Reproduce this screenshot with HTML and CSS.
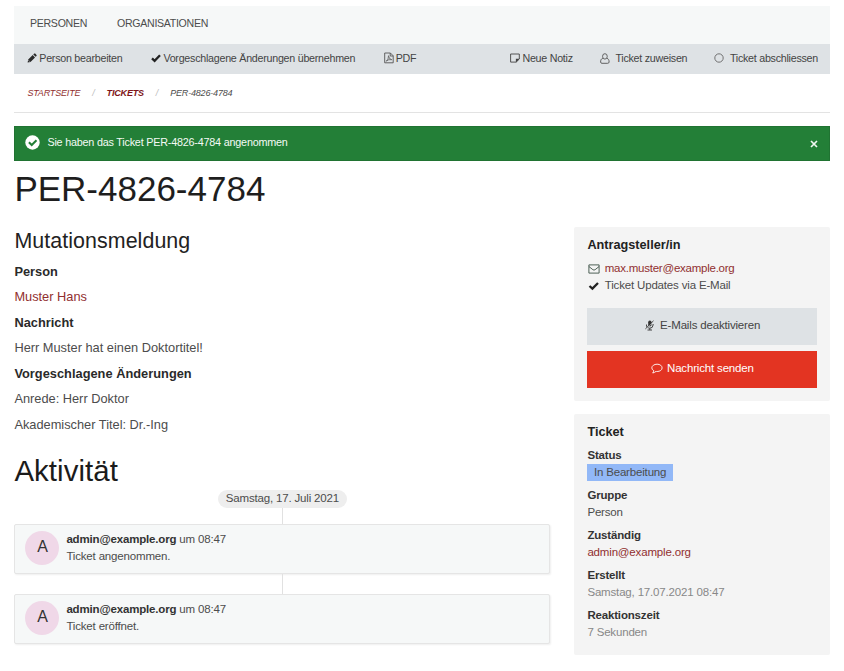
FILE: index.html
```html
<!DOCTYPE html>
<html lang="de">
<head>
<meta charset="utf-8">
<title>PER-4826-4784</title>
<link rel="stylesheet" href="styles.css">
</head>
<body>
<div class="page">
  <nav class="nav"><a>PERSONEN</a><a>ORGANISATIONEN</a></nav>
  <div class="toolbar">
    <a class="t-edit"><svg class="ico" width="10" height="10" viewBox="0 0 10 10"><path d="M.6 9.500 1.200 6.600 5.700 2.100 8 4.400 3.500 8.900zM6.300 1.500 7.200.6Q7.700.2 8.200.6L9.500 1.900Q9.900 2.400 9.500 2.900L8.600 3.800z" fill="#2b2b2b"/><path d="m1.500 7.300 1.300 1.300" stroke="#dee2e5" stroke-width=".7"/></svg><span>Person bearbeiten</span></a>
    <a class="t-apply"><svg class="ico" width="10" height="10" viewBox="0 0 10 10"><path d="m1 5.300 2.600 2.500L9 2.300" fill="none" stroke="#222" stroke-width="2.300"/></svg><span>Vorgeschlagene Änderungen übernehmen</span></a>
    <a class="t-pdf"><svg class="ico" width="10" height="12" viewBox="0 0 10 12"><path d="M.7 1H6.400L9.200 3.800V10.800H.7zM6.200 1V4H9.200" fill="none" stroke="#555" stroke-width=".9"/><path d="M2.200 9.200Q4.700 7.800 4.500 3.700Q5 7.300 7.800 7.700Q4.500 7 2.200 9.200" fill="none" stroke="#555" stroke-width=".75"/></svg><span>PDF</span></a>
    <a class="t-note"><svg class="ico" width="10" height="10" viewBox="0 0 10 10"><path d="M.6 1H9.300V6L6.200 9.100H.6z" fill="none" stroke="#444" stroke-width=".9"/><path d="M5.900 5.800H9.600L5.900 9.500z" fill="#444"/></svg><span>Neue Notiz</span></a>
    <a class="t-assign"><svg class="ico" width="10" height="11" viewBox="0 0 10 11"><path d="M2.800 5.400C1 5.800.6 7.300.6 9.100Q.7 10.300 2 10.300H7.700Q9.100 10.200 9.100 9C9.100 7 8.500 5.700 7 5.400" fill="none" stroke="#555" stroke-width=".9"/><ellipse cx="4.900" cy="3.400" rx="2.350" ry="2.700" fill="none" stroke="#555" stroke-width=".9"/></svg><span>Ticket zuweisen</span></a>
    <a class="t-close"><svg class="ico" width="10" height="10" viewBox="0 0 10 10"><circle cx="5" cy="5" r="4.200" fill="none" stroke="#666" stroke-width=".9"/></svg><span>Ticket abschliessen</span></a>
  </div>
  <div class="crumbs"><a>STARTSEITE</a><i class="sep">/</i><a class="strong">TICKETS</a><i class="sep">/</i><span>PER-4826-4784</span></div>
  <div class="alert"><svg width="15" height="15" viewBox="0 0 15 15"><circle cx="7.500" cy="7.500" r="7.200" fill="#fff"/><path d="m3.900 7.300 2.800 2.700 4.800-4.800" fill="none" stroke="#237f37" stroke-width="2"/></svg><span class="alert-text">Sie haben das Ticket PER-4826-4784 angenommen</span><svg class="dismiss" width="8" height="8" viewBox="0 0 8 8"><path d="m1 1 6 6M7 1 1 7" stroke="#f0f6f1" stroke-width="1.700"/></svg></div>
  <h1>PER-4826-4784</h1>
  <div class="columns">
    <main>
      <h2>Mutationsmeldung</h2>
      <h5>Person</h5>
      <p><a>Muster Hans</a></p>
      <h5>Nachricht</h5>
      <p>Herr Muster hat einen Doktortitel!</p>
      <h5>Vorgeschlagene Änderungen</h5>
      <p>Anrede: Herr Doktor</p>
      <p class="last">Akademischer Titel: Dr.-Ing</p>
      <h2 class="activity">Aktivität</h2>
      <div class="timeline">
        <div class="date">Samstag, 17. Juli 2021</div>
        <div class="line first"></div>
        <div class="entry"><div class="avatar">A</div><div class="body"><div><b>admin@example.org</b> um 08:47</div><div>Ticket angenommen.</div></div></div>
        <div class="line"></div>
        <div class="entry"><div class="avatar">A</div><div class="body"><div><b>admin@example.org</b> um 08:47</div><div>Ticket eröffnet.</div></div></div>
      </div>
    </main>
    <aside>
      <section class="card requester">
        <h4>Antragsteller/in</h4>
        <div class="row"><svg width="12" height="10" viewBox="0 0 12 10"><path d="M.9.900H11.100V9.100H.9zM.9 2.500 4.900 5.700Q6 6.500 7.100 5.700L11.100 2.500" fill="none" stroke="#3c5145" stroke-width=".9"/></svg><a>max.muster@example.org</a></div>
        <div class="row"><svg width="12" height="10" viewBox="0 0 12 10"><path d="m1.500 5 2.900 2.600L10 2" fill="none" stroke="#222" stroke-width="2.300"/></svg><span>Ticket Updates via E-Mail</span></div>
        <div class="btn grey"><svg width="9" height="11" viewBox="0 0 9 11"><rect x="3.200" y=".6" width="3.300" height="5.800" rx="1.600" fill="#333"/><path d="M1.500 4.500V6Q1.700 8.200 4.800 8.200Q7.900 8.200 8.100 5V4M4.800 8.200V10M2.500 10H7" fill="none" stroke="#333" stroke-width=".9"/><path d="M8.900 1.300.8 9.400" stroke="#dee2e5" stroke-width=".8"/><path d="M8.500.8.400 8.900" stroke="#333" stroke-width=".9"/></svg><span>E-Mails deaktivieren</span></div>
        <div class="btn red"><svg width="12" height="11" viewBox="0 0 12 11"><path d="M6.100 1.200C9 1.200 11.100 2.800 11.100 4.900S9 8.500 6.100 8.500Q5.500 8.500 5 8.400Q3.500 9.700 1.700 10Q2.700 8.800 2.800 7.700Q.8 6.600.8 4.900C.8 2.800 3.200 1.200 6.100 1.200z" fill="none" stroke="#fff" stroke-width=".9"/></svg><span>Nachricht senden</span></div>
      </section>
      <section class="card ticket">
        <h4>Ticket</h4>
        <dl>
          <dt>Status</dt><dd><span class="badge">In Bearbeitung</span></dd>
          <dt>Gruppe</dt><dd>Person</dd>
          <dt>Zuständig</dt><dd><a>admin@example.org</a></dd>
          <dt>Erstellt</dt><dd class="muted">Samstag, 17.07.2021 08:47</dd>
          <dt>Reaktionszeit</dt><dd class="muted">7 Sekunden</dd>
        </dl>
      </section>
    </aside>
  </div>
</div>
</body>
</html>
```
FILE: styles.css
```css
* { box-sizing: border-box; }
body { margin: 0; background: #fff; color: #4c4c4c; font: 11.5px/17px "Liberation Sans", Arial, sans-serif; letter-spacing: -.17px; white-space: nowrap; }
svg { flex: none; display: block; }
h1, h2, h4, h5, p, dl, dt, dd { margin: 0; }
.page { width: 816px; margin-left: 14.4px; padding-top: 5.6px; }
.nav { height: 38.4px; background: #f6f8f8; display: flex; gap: 30px; padding: 0 15.6px; font-size: 10.6px; line-height: 35.4px; letter-spacing: -.3px; }
.toolbar { height: 29.7px; background: #dee2e5; display: flex; align-items: center; padding: 0 12.4px 1px; font-size: 10.7px; letter-spacing: -.25px; color: #444; }
.toolbar a { display: flex; align-items: center; gap: 2.5px; }
.t-apply { margin-left: 29px; }
.t-pdf { margin-left: 28.4px; }
.toolbar .t-apply, .toolbar .t-pdf { gap: 2px; }
.t-note { margin-left: auto; }
.t-assign, .t-close { margin-left: 27px; }
.toolbar .t-assign, .toolbar .t-close { gap: 5.6px; }
.crumbs { height: 39px; border-bottom: 1px solid #e3e3e3; padding-left: 13px; display: flex; font-size: 9px; letter-spacing: -.18px; line-height: 38.6px; font-style: italic; }
.sep { margin: 0 12px; color: #bbb; }
.strong { font-weight: bold; }
.crumbs a, main p a, .row a, dd a { color: #912f2f; }
.crumbs .strong { color: #7d1518; }
.alert { height: 35px; margin-top: 13px; background: #237f37; border: 1px solid #207332; color: #f4faf5; display: flex; align-items: center; padding: 0 11px 1px 10px; font-size: 10.8px; letter-spacing: -.21px; }
.alert-text { margin-left: 7px; }
.dismiss { margin-left: auto; margin-top: 3px; }
h1 { font-size: 35px; line-height: 42px; font-weight: normal; letter-spacing: 0; color: #1e1e1e; margin-top: 7.3px; }
.columns { display: flex; justify-content: space-between; }
main { width: 536px; padding-top: 17.8px; }
h2 { font-size: 21.4px; line-height: 26px; font-weight: normal; letter-spacing: .07px; color: #222; }
h5 { font-size: 12.8px; line-height: 17px; letter-spacing: .02px; color: #2a2a2a; margin-top: 9px; }
main p { font-size: 12.8px; line-height: 17px; letter-spacing: 0; margin-top: 8px; }
main .last { margin-top: 9.4px; }
.activity { font-size: 29.4px; line-height: 36px; margin-top: 20px; color: #1b1b1b; }
.timeline { display: flex; flex-direction: column; padding-top: .6px; }
.date { align-self: center; height: 18px; padding: 0 8px; border-radius: 9px; background: #eee; line-height: 16px; }
.line { width: 1px; height: 20px; margin-left: 268px; background: #e1e1e1; }
.line.first { height: 16px; }
.entry { height: 50px; background: #f6f8f8; border: 1px solid #e5e5e5; border-radius: 2px; box-shadow: 1px 1px 2px #0001; display: flex; padding: 6px 10px; }
.avatar { width: 34px; height: 34px; border-radius: 50%; background: #f0d8e8; color: #333; text-align: center; font-size: 16px; line-height: 32px; }
.body { margin-left: 7px; line-height: 17.4px; }
b, dt { color: #333; }
aside { width: 256px; padding-top: 17.1px; }
.card { background: #f4f4f4; border-radius: 2px; padding: 9px 13px 0; }
.requester { height: 173.5px; }
.ticket { height: 241.5px; margin-top: 13px; }
h4 { font-size: 12.7px; line-height: 18px; letter-spacing: 0; color: #222; }
.row { display: flex; align-items: center; gap: 4.4px; height: 17px; padding-left: 1px; }
h4 + .row { margin-top: 6.4px; }
.row a { letter-spacing: -.24px; }
.btn { height: 37px; display: flex; align-items: center; justify-content: center; padding-bottom: 3px; }
.grey { background: #dee2e5; margin-top: 13.6px; color: #444; gap: 6.5px; }
.red { background: #e33422; margin-top: 6px; color: #fff; gap: 4px; }
dl { margin-top: .4px; }
dt { font-weight: bold; margin-top: 6.1px; height: 17px; }
dd { height: 17px; }
.badge { display: inline-block; height: 17px; background: #92b8f7; padding: 0 6.5px; line-height: 16px; }
.muted { color: #888; }
```
